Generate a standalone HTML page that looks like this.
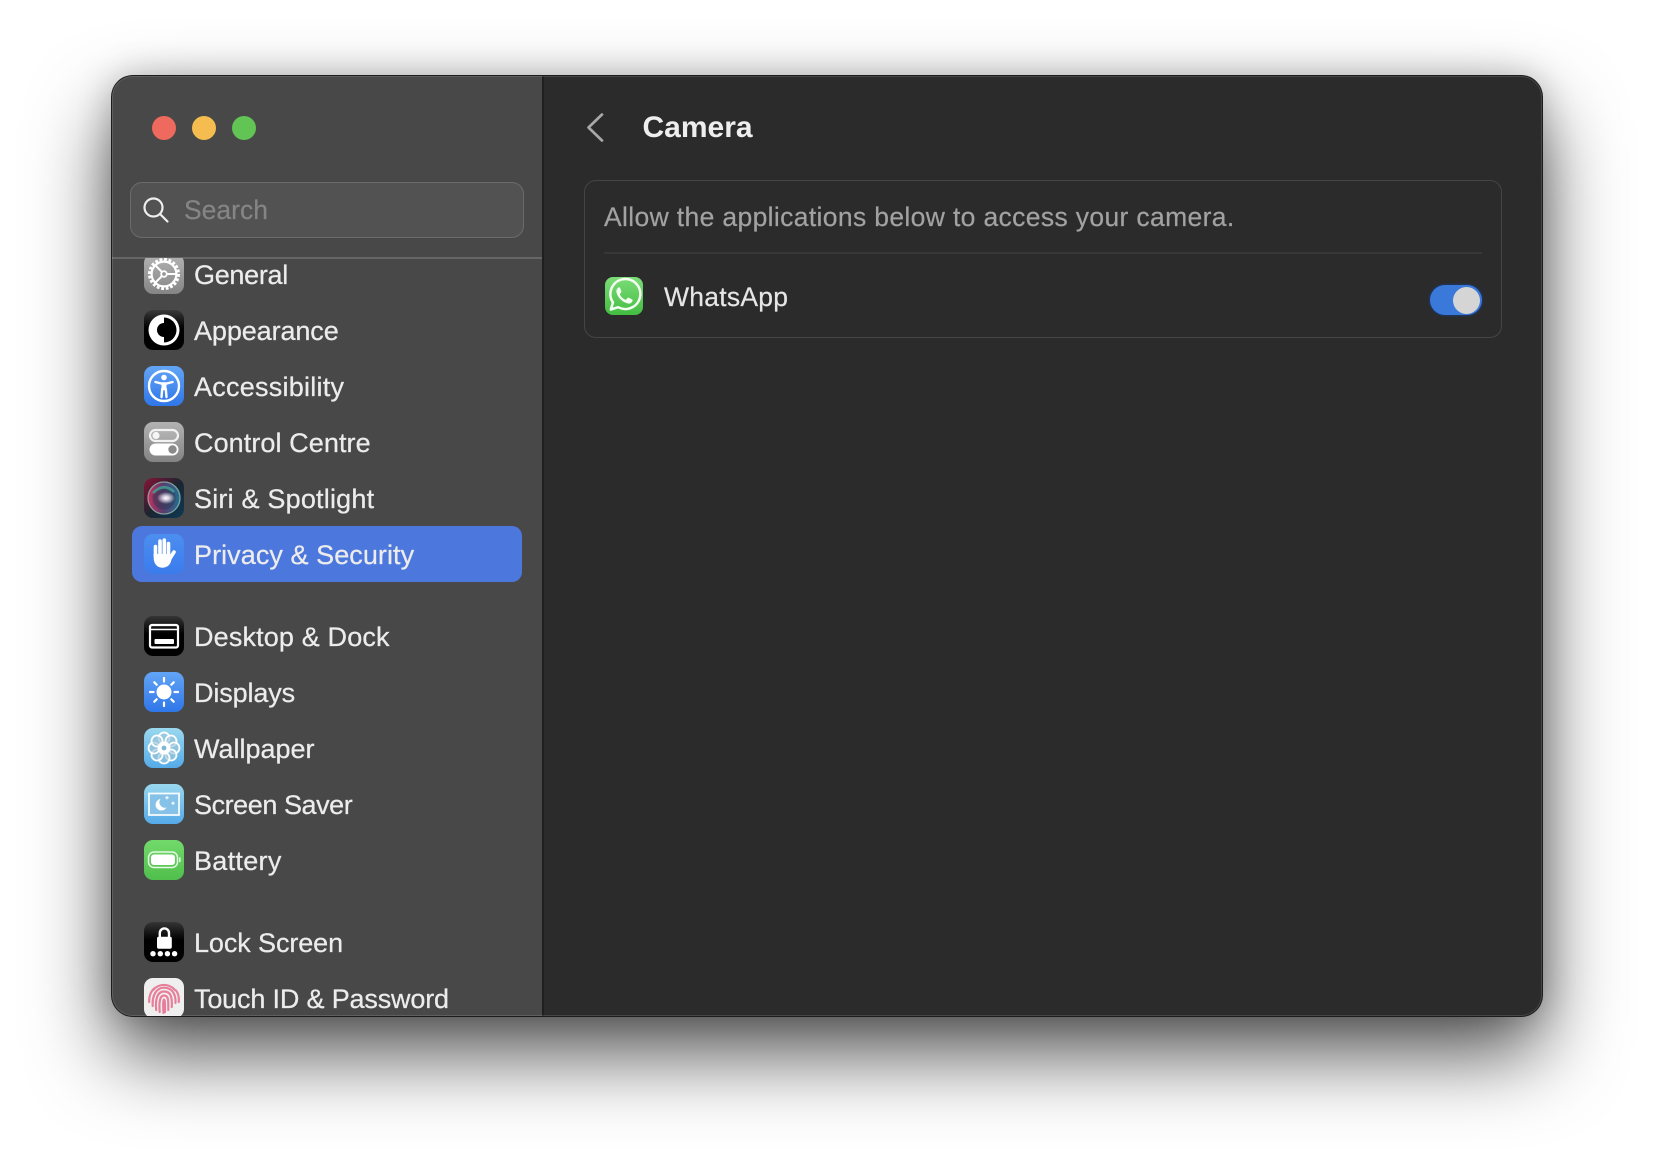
<!DOCTYPE html>
<html><head><meta charset="utf-8"><style>
*{margin:0;padding:0;box-sizing:border-box}
html,body{width:1654px;height:1164px;background:#fff;overflow:hidden;font-family:"Liberation Sans",sans-serif}
.win{position:absolute;left:112px;top:76px;width:1430px;height:940px;border-radius:21px;background:#2c2b2c;box-shadow:0 0 0 1px #1c1c1c,0 38px 80px rgba(0,0,0,.68),0 0 34px rgba(0,0,0,.22)}
.in{position:absolute;inset:0;border-radius:21px;overflow:hidden}
.wrap{position:absolute;left:-1px;top:-1px;width:1432px;height:941px;filter:blur(.35px)}
.side{position:absolute;left:0;top:0;width:433px;height:941px;background:#484848;border-right:2px solid #1f1f1f}
.tl{position:absolute;top:41px;width:24px;height:24px;border-radius:50%}
.search{position:absolute;left:19px;top:107px;width:394px;height:56px;border-radius:12px;background:#525252;border:1px solid #6b6b6b}
.search span{position:absolute;left:53px;top:0;line-height:55px;font-size:26.5px;color:#858585;-webkit-text-stroke:.2px #858585}
.div{position:absolute;left:0;top:182px;width:431px;height:2px;background:#666}
.list{position:absolute;left:0;top:183px;width:431px;height:758px;overflow:hidden}
.sel{position:absolute;left:21px;top:268px;width:390px;height:56px;border-radius:10px;background:#4c78de}
.r{position:absolute;left:83px;font-size:27px;line-height:40px;margin-top:1px;color:#ececec;white-space:nowrap;-webkit-text-stroke:.25px #ececec}
svg.i{position:absolute;left:33px;width:40px;height:40px}
.card{position:absolute;left:473px;top:105px;width:918px;height:158px;border:1.5px solid #464546;border-radius:12px}
.sep{position:absolute;left:493px;top:177px;width:878px;height:1.5px;background:#383738}
.t{position:absolute;white-space:nowrap}
</style></head><body>
<div class="win"><div class="in"><div class="wrap">
<div class="side">
<div class="tl" style="left:41px;background:#ee6a5f"></div>
<div class="tl" style="left:81px;background:#f5bd4f"></div>
<div class="tl" style="left:121px;background:#61c454"></div>
<div class="search">
<svg style="position:absolute;left:11px;top:13px" width="28" height="28" viewBox="0 0 28 28" fill="none" stroke="#eee" stroke-width="2.2"><circle cx="11.5" cy="11.5" r="9"/><path d="M18 18 25.5 25.5" stroke-linecap="round"/></svg>
<span>Search</span></div>
<div class="div"></div>
<div class="list">
<div class="sel"></div>

<svg class="i" style="top:-4px" viewBox="0 0 40 40"><defs><linearGradient id="g1" x1="0" y1="0" x2="0" y2="1"><stop offset="0" stop-color="#b4b4b4"/><stop offset="1" stop-color="#858585"/></linearGradient></defs><rect width="40" height="40" rx="9" fill="url(#g1)"/><circle cx="20" cy="20" r="14.5" fill="none" stroke="#fff" stroke-width="3" stroke-dasharray="2.8 1.75"/><circle cx="20" cy="20" r="12.4" fill="none" stroke="#fff" stroke-width="2.2"/><path d="M20 20 11.5 11.5M20 20 11.5 28.5M20 20H32" stroke="#fff" stroke-width="2"/><circle cx="20" cy="20" r="2.8" fill="#999" stroke="#fff" stroke-width="1.8"/></svg>
<div class="r" style="top:-4px;letter-spacing:-.3px">General</div>

<svg class="i" style="top:52px" viewBox="0 0 40 40"><defs><linearGradient id="g2" x1="0" y1="0" x2="0" y2="1"><stop offset="0" stop-color="#3a3a3a"/><stop offset=".45" stop-color="#000"/></linearGradient></defs><rect width="40" height="40" rx="9" fill="url(#g2)"/><circle cx="20" cy="20" r="15.5" fill="#fff"/><path d="M20 7.5A12.5 12.5 0 0 1 20 32.5Z" fill="#000"/><path d="M20 13A7 7 0 0 0 20 27Z" fill="#000"/></svg>
<div class="r" style="top:52px;letter-spacing:-.1px">Appearance</div>

<svg class="i" style="top:108px" viewBox="0 0 40 40"><defs><linearGradient id="g3" x1="0" y1="0" x2="0" y2="1"><stop offset="0" stop-color="#63a5f6"/><stop offset="1" stop-color="#2f76e8"/></linearGradient></defs><rect width="40" height="40" rx="9" fill="url(#g3)"/><circle cx="20" cy="20" r="15" fill="none" stroke="#fff" stroke-width="2.4"/><circle cx="20" cy="11.5" r="2.8" fill="#fff"/><path d="M11.5 16 17.2 17.5 22.8 17.5 28.5 16M17.5 31 18.2 23H21.8L22.5 31" fill="none" stroke="#fff" stroke-width="2.4" stroke-linecap="round" stroke-linejoin="round"/><rect x="17.5" y="17" width="5" height="7" fill="#fff"/></svg>
<div class="r" style="top:108px;letter-spacing:.25px">Accessibility</div>

<svg class="i" style="top:164px" viewBox="0 0 40 40"><defs><linearGradient id="g4" x1="0" y1="0" x2="0" y2="1"><stop offset="0" stop-color="#b2b2b2"/><stop offset="1" stop-color="#838383"/></linearGradient></defs><rect width="40" height="40" rx="9" fill="url(#g4)"/><rect x="6" y="8" width="28" height="11" rx="5.5" fill="#fff" fill-opacity=".12" stroke="#f2f2f2" stroke-width="2.2"/><circle cx="12" cy="13.5" r="3.6" fill="#f5f5f5"/><rect x="5.5" y="21.5" width="29" height="12" rx="6" fill="#fff"/><circle cx="28.5" cy="27.5" r="4.2" fill="#8a8a8a"/></svg>
<div class="r" style="top:164px;letter-spacing:.08px">Control Centre</div>

<svg class="i" style="top:220px" viewBox="0 0 40 40"><defs><linearGradient id="g5" x1="0" y1="0" x2="1" y2="1"><stop offset="0" stop-color="#8a1236"/><stop offset=".5" stop-color="#1c2430"/><stop offset="1" stop-color="#0c3a55"/></linearGradient><linearGradient id="g5b" x1="0" y1="0" x2="1" y2="0"><stop offset="0" stop-color="#c9305f"/><stop offset=".45" stop-color="#5e3a6e"/><stop offset="1" stop-color="#1f6f92"/></linearGradient><radialGradient id="g5c"><stop offset="0" stop-color="#fff"/><stop offset=".3" stop-color="#f0e4f4" stop-opacity=".9"/><stop offset="1" stop-color="#fff" stop-opacity="0"/></radialGradient></defs><rect width="40" height="40" rx="9" fill="url(#g5)"/><path d="M7 9Q20-2 33 9L20 20Z" fill="#17705c"/><circle cx="20" cy="20" r="16.5" fill="url(#g5b)"/><circle cx="20" cy="20" r="16" fill="none" stroke="#8fb5a8" stroke-width="1.3" opacity=".8"/><circle cx="20" cy="20" r="11.5" fill="#2c3550" opacity=".5"/><path d="M9 15Q20 4 30 14" fill="none" stroke="#3fb59a" stroke-width="2.5" opacity=".7"/><ellipse cx="22" cy="20" rx="9" ry="6" fill="url(#g5c)"/></svg>
<div class="r" style="top:220px;letter-spacing:.2px">Siri &amp; Spotlight</div>

<svg class="i" style="top:276px" viewBox="0 0 40 40"><defs><linearGradient id="g6" x1="0" y1="0" x2="0" y2="1"><stop offset="0" stop-color="#4d8ef0"/><stop offset="1" stop-color="#3a7cec"/></linearGradient></defs><rect width="40" height="40" rx="9" fill="url(#g6)"/><g stroke="#fff" stroke-width="3.6" stroke-linecap="round" fill="none"><path d="M11.5 22V12.5M16 20V7M20.3 20V6M24.5 20V9.5M25 26 30 18"/></g><path d="M9.7 20H26.3V24L27.5 24C27.5 30 23.5 33.7 18.5 33.7C13 33.7 9.7 29.5 9.7 24Z" fill="#fff"/></svg>
<div class="r" style="top:276px;letter-spacing:.06px">Privacy &amp; Security</div>

<svg class="i" style="top:358px" viewBox="0 0 40 40"><defs><linearGradient id="g7" x1="0" y1="0" x2="0" y2="1"><stop offset="0" stop-color="#353535"/><stop offset=".45" stop-color="#000"/></linearGradient></defs><rect width="40" height="40" rx="9" fill="url(#g7)"/><rect x="6" y="9" width="28" height="22.5" rx="2" fill="none" stroke="#fff" stroke-width="2.2"/><path d="M6 13.5H34" stroke="#fff" stroke-width="1.6"/><rect x="10.5" y="23" width="19.5" height="5" rx="1" fill="#fff"/></svg>
<div class="r" style="top:358px;letter-spacing:.15px">Desktop &amp; Dock</div>

<svg class="i" style="top:414px" viewBox="0 0 40 40"><rect width="40" height="40" rx="9" fill="url(#g3)"/><circle cx="20" cy="20" r="7.5" fill="#fff"/><g stroke="#fff" stroke-width="2.2" stroke-linecap="round"><path d="M20 6V9.5M20 30.5V34M6 20H9.5M30.5 20H34M10.3 10.3 12.7 12.7M27.3 27.3 29.7 29.7M10.3 29.7 12.7 27.3M27.3 12.7 29.7 10.3"/></g></svg>
<div class="r" style="top:414px;letter-spacing:-.13px">Displays</div>

<svg class="i" style="top:470px" viewBox="0 0 40 40"><defs><linearGradient id="g8" x1="0" y1="0" x2="0" y2="1"><stop offset="0" stop-color="#9ad8ee"/><stop offset="1" stop-color="#55aae8"/></linearGradient></defs><rect width="40" height="40" rx="9" fill="url(#g8)"/><g fill="#9cc6d8" fill-opacity=".65" stroke="#fff" stroke-width="1.8"><circle cx="20" cy="10" r="5.5"/><circle cx="27" cy="13" r="5.5"/><circle cx="30" cy="20" r="5.5"/><circle cx="27" cy="27" r="5.5"/><circle cx="20" cy="30" r="5.5"/><circle cx="13" cy="27" r="5.5"/><circle cx="10" cy="20" r="5.5"/><circle cx="13" cy="13" r="5.5"/></g><circle cx="20" cy="20" r="6.5" fill="#fff"/><circle cx="20" cy="20" r="2.4" fill="#7fb8d6"/></svg>
<div class="r" style="top:470px">Wallpaper</div>

<svg class="i" style="top:526px" viewBox="0 0 40 40"><rect width="40" height="40" rx="9" fill="url(#g8)"/><rect x="5" y="9.5" width="30" height="21.5" fill="#86c2e8" stroke="#f4fafd" stroke-width="1.8"/><path d="M16.5 15A5.8 5.8 0 1 0 22.5 23.5A5.5 5.5 0 0 1 16.5 15Z" fill="#fff"/><path d="M23 12v3.4M21.3 13.7h3.4M29 17.5v3.4M27.3 19.2h3.4" stroke="#fff" stroke-width="1.1"/></svg>
<div class="r" style="top:526px;letter-spacing:-.44px">Screen Saver</div>

<svg class="i" style="top:582px" viewBox="0 0 40 40"><defs><linearGradient id="g9" x1="0" y1="0" x2="0" y2="1"><stop offset="0" stop-color="#72da6b"/><stop offset="1" stop-color="#50bf4c"/></linearGradient></defs><rect width="40" height="40" rx="9" fill="url(#g9)"/><rect x="4.5" y="12" width="29" height="15.5" rx="5.5" fill="none" stroke="#e4f8e2" stroke-width="1.5"/><rect x="7" y="14.5" width="24" height="10.5" rx="3" fill="#fff"/><rect x="35" y="17.3" width="1.6" height="5" rx=".8" fill="#e4f8e2"/></svg>
<div class="r" style="top:582px;letter-spacing:.3px">Battery</div>

<svg class="i" style="top:664px" viewBox="0 0 40 40"><rect width="40" height="40" rx="9" fill="url(#g7)"/><path d="M15.8 15V11a4.6 4.6 0 0 1 9.2 0V15" fill="none" stroke="#fff" stroke-width="2.4"/><rect x="13" y="14.7" width="14.8" height="12" rx="1.8" fill="#fff"/><g fill="#fff"><circle cx="9" cy="31.7" r="2.7"/><circle cx="16.3" cy="31.7" r="2.7"/><circle cx="23.4" cy="31.7" r="2.7"/><circle cx="30.6" cy="31.7" r="2.7"/></g></svg>
<div class="r" style="top:664px;letter-spacing:-.1px">Lock Screen</div>

<svg class="i" style="top:720px" viewBox="0 0 40 40"><rect width="40" height="40" rx="9" fill="#f0eff0"/><g fill="none" stroke="#e67f9a" stroke-width="2.2" stroke-linecap="round"><path d="M9 12A14.5 14.5 0 0 1 31 12"/><path d="M5.2 24C4.8 18 7 13.5 10 10.5"/><path d="M34.8 24C35.2 19 34 15 32 12.5"/><path d="M8.7 28C8 18 12 9.7 20 9.7S32 16 31.5 25"/><path d="M12.2 32C11.2 22 13 13.5 20 13.5S28.2 19 27.8 29"/><path d="M15.7 34C15 25 15.5 17.5 20 17.5S24.5 22 24.3 32"/><path d="M19.5 35C19 28 19 21.5 20 21.5S21 26 21 34"/></g></svg>
<div class="r" style="top:720px;letter-spacing:-.17px">Touch ID &amp; Password</div>
</div></div>

<svg style="position:absolute;left:474px;top:36px" width="22" height="34" viewBox="0 0 22 34" fill="none" stroke="#a8a8a8" stroke-width="2.7" stroke-linecap="round" stroke-linejoin="round"><path d="M17 3.5 3.5 16.5 17 29.5"/></svg>
<div class="t" style="left:531.5px;top:35px;line-height:36px;font-size:30px;font-weight:bold;color:#eee">Camera</div>
<div class="card"></div>
<div class="t" style="left:493px;top:124px;line-height:36px;font-size:26.5px;letter-spacing:.35px;color:#a3a2a3;-webkit-text-stroke:.2px #a3a2a3">Allow the applications below to access your camera.</div>
<div class="sep"></div>
<svg style="position:absolute;left:494px;top:202px" width="38" height="38" viewBox="0 0 38 38"><defs><linearGradient id="w" x1="0" y1="0" x2="0" y2="1"><stop offset="0" stop-color="#7cdd77"/><stop offset="1" stop-color="#43bd42"/></linearGradient></defs><rect width="38" height="38" rx="8" fill="url(#w)"/><path d="M5.8 32.5 8 25.5A15 15 0 1 1 13.2 30.2Z" fill="none" stroke="#f4fff2" stroke-width="2.5" stroke-linejoin="round"/><path d="M13.5 10.5C12 11.5 11 13 11.5 15.5C12.5 20 17.5 25.5 23 26.5C25.5 27 27 25.5 27.5 24C27.8 23 27.5 22.6 26.8 22.2L24 20.8C23.3 20.5 22.8 20.6 22.3 21.2L21.3 22.4C20.9 22.8 20.5 22.9 20 22.6C17.8 21.6 16 19.8 15 17.8C14.8 17.3 14.9 17 15.2 16.6L16.2 15.3C16.5 14.9 16.5 14.5 16.3 14L15.2 11.2C14.9 10.4 14.2 10.1 13.5 10.5Z" fill="#f4fff2"/></svg>
<div class="t" style="left:553px;top:204px;line-height:36px;font-size:26.5px;letter-spacing:.25px;color:#e6e6e6;-webkit-text-stroke:.2px #e6e6e6">WhatsApp</div>
<div style="position:absolute;left:1319px;top:210px;width:52px;height:30px;border-radius:15px;background:#3a79da;box-shadow:0 0 0 1.5px #1f3454"></div>
<div style="position:absolute;left:1342px;top:211.5px;width:27px;height:27px;border-radius:50%;background:#d5d5d6"></div>
</div></div>
<div style="position:absolute;inset:0;border-radius:21px;box-shadow:inset 0 0 0 1px rgba(255,255,255,.13);pointer-events:none"></div>
</div>
</body></html>
